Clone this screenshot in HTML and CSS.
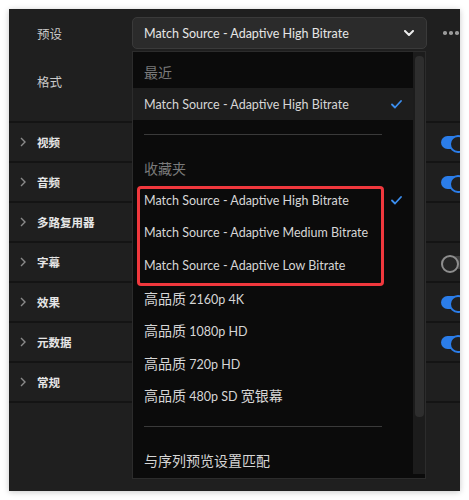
FILE: index.html
```html
<!DOCTYPE html>
<html lang="zh">
<head>
<meta charset="utf-8">
<link rel="stylesheet" href="styles.css">
</head>
<body>
<div class="panel">
  <div class="top">
    <div class="field-row">
      <span class="field-label">预设</span>
      <div class="select">
        <span>Match Source - Adaptive High Bitrate</span>
        <svg class="sel-chev" width="10" height="6" viewBox="0 0 10 6"><path d="M1 1 L5 5 L9 1" fill="none" stroke="#ececec" stroke-width="2" stroke-linecap="round" stroke-linejoin="round"/></svg>
      </div>
      <span class="more"><i></i><i></i><i></i></span>
    </div>
    <div class="field-row format">
      <span class="field-label">格式</span>
    </div>
  </div>

  <div class="sections">
    <div class="sec"><svg class="chev" width="6" height="10" viewBox="0 0 6 10"><path d="M1 1 L5 5 L1 9" fill="none" stroke="#8a8a8a" stroke-width="1.4"/></svg><span>视频</span><span class="toggle on"></span></div>
    <div class="sec"><svg class="chev" width="6" height="10" viewBox="0 0 6 10"><path d="M1 1 L5 5 L1 9" fill="none" stroke="#8a8a8a" stroke-width="1.4"/></svg><span>音频</span><span class="toggle on"></span></div>
    <div class="sec"><svg class="chev" width="6" height="10" viewBox="0 0 6 10"><path d="M1 1 L5 5 L1 9" fill="none" stroke="#8a8a8a" stroke-width="1.4"/></svg><span>多路复用器</span></div>
    <div class="sec"><svg class="chev" width="6" height="10" viewBox="0 0 6 10"><path d="M1 1 L5 5 L1 9" fill="none" stroke="#8a8a8a" stroke-width="1.4"/></svg><span>字幕</span><span class="toggle off"></span></div>
    <div class="sec"><svg class="chev" width="6" height="10" viewBox="0 0 6 10"><path d="M1 1 L5 5 L1 9" fill="none" stroke="#8a8a8a" stroke-width="1.4"/></svg><span>效果</span><span class="toggle on"></span></div>
    <div class="sec"><svg class="chev" width="6" height="10" viewBox="0 0 6 10"><path d="M1 1 L5 5 L1 9" fill="none" stroke="#8a8a8a" stroke-width="1.4"/></svg><span>元数据</span><span class="toggle on"></span></div>
    <div class="sec"><svg class="chev" width="6" height="10" viewBox="0 0 6 10"><path d="M1 1 L5 5 L1 9" fill="none" stroke="#8a8a8a" stroke-width="1.4"/></svg><span>常规</span></div>
  </div>

  <div class="menu">
    <div class="menu-list">
      <div class="menu-head first">最近</div>
      <div class="item sel-row"><span>Match Source - Adaptive High Bitrate</span><svg class="check" width="11" height="9" viewBox="0 0 11 9"><path d="M1 4.5 L4 7.5 L10 1" fill="none" stroke="#3b8eef" stroke-width="1.8" stroke-linecap="round" stroke-linejoin="round"/></svg></div>
      <div class="divider"></div>
      <div class="menu-head second">收藏夹</div>
      <div class="group">
        <div class="item"><span>Match Source - Adaptive High Bitrate</span><svg class="check" width="11" height="9" viewBox="0 0 11 9"><path d="M1 4.5 L4 7.5 L10 1" fill="none" stroke="#3b8eef" stroke-width="1.8" stroke-linecap="round" stroke-linejoin="round"/></svg></div>
        <div class="item"><span>Match Source - Adaptive Medium Bitrate</span></div>
        <div class="item"><span>Match Source - Adaptive Low Bitrate</span></div>
      </div>
      <div class="item"><span><span class="cjk">高品质</span> 2160p 4K</span></div>
      <div class="item"><span><span class="cjk">高品质</span> 1080p HD</span></div>
      <div class="item"><span><span class="cjk">高品质</span> 720p HD</span></div>
      <div class="item"><span><span class="cjk">高品质</span> 480p SD <span class="cjk">宽银幕</span></span></div>
      <div class="divider last"></div>
      <div class="item"><span class="cjk">与序列预览设置匹配</span></div>
    </div>
    <div class="scroll"><div class="thumb"></div></div>
  </div>
</div>
</body>
</html>
```

FILE: styles.css
```css
* { box-sizing: border-box; }

body {
  margin: 0;
  background: #ffffff;
  font-family: Lato, "Noto Sans CJK SC", sans-serif;
}

.panel {
  position: relative;
  margin: 9px;
  width: 451px;
  height: 482px;
  background: #1f1f1f;
  overflow: hidden;
  box-shadow: 0 1px 6px rgba(0, 0, 0, 0.22);
}

.top {
  height: 112px;
  padding: 8px 0 0 28px;
}

.field-row {
  display: flex;
  align-items: center;
  height: 32px;
}

.format { margin-top: 16px; }

.field-label {
  width: 95px;
  flex: none;
  font-size: 12.5px;
  color: #c9c9c9;
}

.select {
  width: 295px;
  height: 32px;
  flex: none;
  display: flex;
  align-items: center;
  justify-content: space-between;
  padding: 0 12px 0 11px;
  border: 1px solid #3a3a3a;
  border-radius: 5px;
  background: #2b2b2b;
  font-size: 12.5px;
  color: #e6e6e6;
}

.more {
  display: flex;
  gap: 2.5px;
  margin-left: 16px;
}

.more i {
  width: 3.5px;
  height: 3.5px;
  border-radius: 50%;
  background: #9a9a9a;
}

.sections { border-bottom: 2px solid #141414; }

.sec {
  display: flex;
  align-items: center;
  height: 40px;
  padding-left: 11px;
  border-top: 2px solid #141414;
  font-size: 11.5px;
  font-weight: 700;
  color: #e6e6e6;
}

.chev { margin-right: 11px; flex: none; }

.toggle {
  position: relative;
  margin-left: auto;
  margin-right: -7px;
  width: 26px;
  height: 13px;
  border-radius: 7px;
}

.toggle::after {
  content: "";
  position: absolute;
  top: -0.5px;
  width: 14px;
  height: 14px;
  border-radius: 50%;
  background: #1f1f1f;
}

.toggle.on { background: #2b7de9; }
.toggle.on::after { right: 0; border: 2px solid #2b7de9; }

.toggle.off { background: #3f3f3f; }
.toggle.off::after { left: 0; border: 2px solid #8e8e8e; background: #262626; }

/* dropdown overlay */
.menu {
  position: absolute;
  left: 123px;
  top: 42px;
  width: 294px;
  height: 428px;
  display: flex;
  background: #0b0b0b;
  border: 1px solid #2c2c2c;
}

.menu-list {
  flex: 1;
  font-size: 12.5px;
  color: #d6d6d6;
}

.cjk { font-size: 14px; }

.menu-head {
  display: flex;
  align-items: center;
  padding-left: 11px;
  font-size: 14px;
  color: #7a7a7a;
}

.menu-head.first { height: 36px; padding-top: 4px; }
.menu-head.second { height: 49.4px; padding-top: 17.4px; }

.item {
  height: 32.4px;
  display: flex;
  align-items: center;
  justify-content: space-between;
  padding: 0 11px;
  white-space: nowrap;
}

.sel-row { background: #1d1d1d; height: 32px; }

.divider {
  height: 1px;
  margin: 14px 31px 0 11px;
  background: #3a3a3a;
}

.divider.last { margin-top: 15px; margin-bottom: 17px; }

.group { position: relative; }

.group::after {
  content: "";
  position: absolute;
  top: 1.2px;
  left: 4px;
  width: 241px;
  height: 94px;
  border: 3px solid #f0383d;
  border-radius: 4px;
}

.scroll {
  width: 12px;
  flex: none;
  margin-bottom: 4px;
  padding: 4px 1.5px 0 2px;
  background: #1c1c1c;
}

.thumb {
  height: 361px;
  border-radius: 4px;
  background: #2e2e2e;
}
```
